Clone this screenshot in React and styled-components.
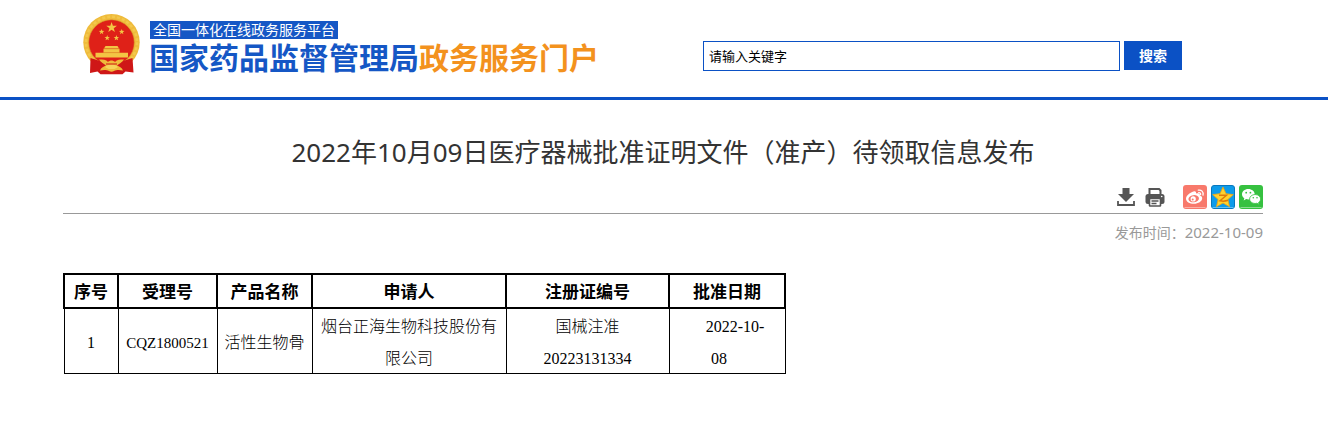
import React from 'react';
import styled, { createGlobalStyle } from 'styled-components';

const sans = `'Noto Sans', 'Noto Sans CJK SC', sans-serif`;
const cjk = `'Noto Sans CJK SC', sans-serif`;

const columns = [
  { label: '序号', width: 54 },
  { label: '受理号', width: 99 },
  { label: '产品名称', width: 95 },
  { label: '申请人', width: 194 },
  { label: '注册证编号', width: 163 },
  { label: '批准日期', width: 116 },
];

const star = (cx, cy, r) =>
  Array.from({ length: 10 }, (_, i) => {
    const a = (Math.PI / 5) * i - Math.PI / 2;
    const d = i % 2 ? r * 0.4 : r;
    return `${(cx + d * Math.cos(a)).toFixed(2)},${(cy + d * Math.sin(a)).toFixed(2)}`;
  }).join(' ');

const Emblem = () => (
  <svg width='57' height='61' viewBox='0 0 57 61' aria-hidden='true'>
    <circle cx='28.5' cy='28.3' r='28.2' fill='#efbb3b' />
    <circle cx='28.5' cy='28.3' r='25.5' fill='none' stroke='#f3c84c' strokeWidth='2.5' strokeDasharray='3 2' />
    <circle cx='28.5' cy='28.5' r='22.8' fill='#df2118' stroke='#d99a2a' strokeWidth='0.6' />
    <g fill='#f3c544'>
      <polygon points={star(28.6, 13.5, 5.6)} />
      <polygon points={star(18.6, 17.8, 2.9)} />
      <polygon points={star(38.7, 17.8, 2.9)} />
      <polygon points={star(24.2, 24, 2.9)} />
      <polygon points={star(33.4, 24, 2.9)} />
      <path d='M22.5 32h12l1.5 2.6H21z' />
      <path d='M20.5 34.8h16v4h-16z' />
      <path d='M12.5 38.8h32.5v4.6H12.5z' />
    </g>
    <path d='M20.5 34.8h16M20 38.6h17' stroke='#d9811f' strokeWidth='0.5' />
    <path d='M7.5 44c6 2 10 3 13 4.5h16c3-1.500 7-2.500 13-4.500l1 14.500-8-1-3 2.800H17.500l-3-2.800-7.500 1.500z' fill='#cf1717' />
    <path d='M16 45.500c4 0 7 0 9 2.500 2-2 5-2 7 0 2-2.500 5-2.500 9-2.500-2 3-5 4-7 6 2 1 5 2 6 5-4-1-7-.5-9 .5-1.500 1-3.500 1-5 0-2-1-5-1.500-9-.5 1-3 4-4 6-5-2-2-5-3-7-6z' fill='#efbb3b' />
    <path d='M22 53c3-3.500 10-3.500 13 0l-3.500 2h-6z' fill='#f7d35c' />
    <path d='M23 50h11M25.500 58.500h7' stroke='#cf1717' strokeWidth='1' />
  </svg>
);

const DownloadIcon = () => (
  <svg width='18' height='18' viewBox='0 0 18 18' aria-hidden='true'>
    <path d='M5.500 0h7v6H17l-8 8-8-8h4.500z' fill='#555' />
    <path d='M1 13v4h16v-4' fill='none' stroke='#555' strokeWidth='1.800' />
  </svg>
);

const PrintIcon = () => (
  <svg width='20' height='19' viewBox='0 0 20 19' aria-hidden='true'>
    <path d='M4.500 6V1h9.500l1.500 1.500V6' fill='none' stroke='#555' strokeWidth='2' />
    <rect x='0.500' y='6' width='19' height='10' rx='2.500' fill='#555' />
    <rect x='4.500' y='10.500' width='11' height='7.500' rx='0.5' fill='#fff' stroke='#555' strokeWidth='1.600' />
    <path d='M6.500 13h7M6.500 15.500h5' stroke='#555' strokeWidth='1.300' />
    <circle cx='16.700' cy='8.500' r='0.800' fill='#fff' />
  </svg>
);

const WeiboIcon = () => (
  <svg width='24' height='24' viewBox='0 0 24 24' aria-hidden='true'>
    <rect width='24' height='24' rx='3' fill='#f8796b' />
    <path d='M1.500 22.500h21' stroke='#fbb0a7' />
    <path
      d='M10.500 6.500c1.600-.6 2.900.1 2.500 2 2.300-.7 4.300-.1 3.900 1.900 1.500.5 2.300 1.400 2.300 2.800 0 3-4 5.500-8.300 5.500-4.300 0-7.900-2-7.900-5 0-2.700 3.700-6.200 7.500-7.200z'
      fill='#fff'
    />
    <ellipse cx='10.700' cy='13.700' rx='5.300' ry='3.600' transform='rotate(-8 10.700 13.700)' fill='#f8796b' />
    <circle cx='10.200' cy='13.900' r='2.600' fill='#fff' />
    <circle cx='9.700' cy='14.400' r='1' fill='#f8796b' />
    <path d='M15.300 5.200c3-.7 5.500 1.600 4.700 5M15.700 7.700c1.300-.2 2.200.7 1.900 2' fill='none' stroke='#fff' strokeWidth='1.300' strokeLinecap='round' />
  </svg>
);

const QzoneIcon = () => (
  <svg width='24' height='24' viewBox='0 0 24 24' aria-hidden='true'>
    <rect x='0.500' y='0.500' width='23' height='23' rx='2.500' fill='#0d9bea' stroke='#0877bd' />
    <path d='M1.500 22.500h21' stroke='#5fc0f5' />
    <path
      d='M12 2l3 6.700 7.300.9-5.400 4.900 1.600 7.200L12 18l-6.500 3.700 1.600-7.200-5.400-4.900L9 8.700z'
      fill='#ffd22e'
      stroke='#f3a50c'
      strokeWidth='0.800'
      strokeLinejoin='round'
    />
    <path d='M8 10.200h7.500L9 15.800c3 .6 5.500.4 8-.5' fill='none' stroke='#e07a08' strokeWidth='1.500' />
  </svg>
);

const WechatIcon = () => (
  <svg width='24' height='24' viewBox='0 0 24 24' aria-hidden='true'>
    <rect width='24' height='24' rx='3' fill='#36c140' />
    <path d='M1.500 22.500h21' stroke='#8bdd90' />
    <path d='M9.300 4C5.700 4 3 6.300 3 9.200c0 1.600.9 3 2.300 4l-.6 2.300 2.500-1.400c.7.200 1.400.3 2.100.3 3.600 0 6.400-2.300 6.400-5.200S12.900 4 9.300 4z' fill='#fff' />
    <path
      d='M16.100 9.500c-3.100 0-5.500 2-5.500 4.500s2.400 4.500 5.500 4.500c.6 0 1.200-.1 1.800-.3l2.200 1.200-.5-2c1.200-.8 2-2 2-3.400 0-2.500-2.400-4.500-5.500-4.500z'
      fill='#fff'
      stroke='#36c140'
      strokeWidth='0.800'
    />
    <g fill='#36c140'>
      <circle cx='7.200' cy='7.700' r='0.900' />
      <circle cx='11.400' cy='7.700' r='0.900' />
      <circle cx='14.300' cy='12.700' r='0.800' />
      <circle cx='18' cy='12.700' r='0.800' />
    </g>
  </svg>
);

const App = () => {
  return (
    <>
      <GlobalStyle />
      <Header>
        <Brand href='#'>
          <Emblem />
          <BrandText>
            <Platform>全国一体化在线政务服务平台</Platform>
            <SiteName>
              国家药品监督管理局<em>政务服务门户</em>
            </SiteName>
          </BrandText>
        </Brand>
        <Search onSubmit={(e) => e.preventDefault()}>
          <SearchInput type='text' aria-label='搜索关键字' defaultValue='请输入关键字' />
          <SearchButton type='submit'>搜索</SearchButton>
        </Search>
      </Header>
      <Main>
        <Title>2022年10月09日医疗器械批准证明文件（准产）待领取信息发布</Title>
        <Toolbar>
          <Tools>
            <IconButton type='button' aria-label='下载'>
              <DownloadIcon />
            </IconButton>
            <IconButton type='button' aria-label='打印'>
              <PrintIcon />
            </IconButton>
          </Tools>
          <Share>
            <ShareLink href='#' aria-label='微博'>
              <WeiboIcon />
            </ShareLink>
            <ShareLink href='#' aria-label='QQ空间'>
              <QzoneIcon />
            </ShareLink>
            <ShareLink href='#' aria-label='微信'>
              <WechatIcon />
            </ShareLink>
          </Share>
        </Toolbar>
        <Published>
          发布时间：<time dateTime='2022-10-09'>2022-10-09</time>
        </Published>
        <Table>
          <colgroup>
            {columns.map(({ label, width }) => (
              <Col key={label} $width={width} />
            ))}
          </colgroup>
          <thead>
            <tr>
              {columns.map(({ label }) => (
                <Th key={label} scope='col'>
                  {label}
                </Th>
              ))}
            </tr>
          </thead>
          <tbody>
            <tr>
              <Td>
                <Latin>1</Latin>
              </Td>
              <Td>
                <Latin $small>CQZ1800521</Latin>
              </Td>
              <Td>活性生物骨</Td>
              <Td>烟台正海生物科技股份有限公司</Td>
              <Td>
                国械注准
                <br />
                <Latin>20223131334</Latin>
              </Td>
              <Td>
                <Latin>
                  &nbsp;&nbsp;&nbsp;&nbsp;2022-10-
                  <br />
                  08&nbsp;&nbsp;&nbsp;&nbsp;
                </Latin>
              </Td>
            </tr>
          </tbody>
        </Table>
      </Main>
    </>
  );
};

const GlobalStyle = createGlobalStyle`
  * {
    box-sizing: border-box;
  }
  body {
    margin: 0;
    background: #fff;
    color: #000;
    font-family: ${sans};
  }
`;

const Header = styled.header`
  display: flex;
  justify-content: space-between;
  align-items: flex-start;
  gap: 24px;
  padding: 14px 146px 22px 83px;
  border-bottom: 3px solid #0b51c5;
`;

const Brand = styled.a`
  display: flex;
  flex-shrink: 0;
  gap: 9px;
  text-decoration: none;
  svg {
    display: block;
  }
`;

const BrandText = styled.span`
  display: flex;
  flex-direction: column;
  align-items: flex-start;
  padding-top: 7px;
  font-family: ${cjk};
`;

const Platform = styled.span`
  margin-left: 1px;
  padding: 0 3px 2px;
  background: #1557c5;
  color: #fff;
  font-size: 14px;
  line-height: 16px;
`;

const SiteName = styled.span`
  color: #1557c5;
  font-size: 30px;
  font-weight: 700;
  line-height: 34px;
  white-space: nowrap;
  em {
    color: #f3921e;
    font-style: normal;
  }
`;

const Search = styled.form`
  display: flex;
  flex: 0 1 479px;
  align-items: flex-start;
  gap: 4px;
  padding-top: 27px;
`;

const SearchInput = styled.input`
  flex: 1;
  min-width: 0;
  height: 30px;
  padding: 0 5px 2px;
  border: 1px solid #0b51c5;
  background: #fff;
  color: #000;
  font-family: ${cjk};
  font-size: 13px;
`;

const SearchButton = styled.button`
  height: 29px;
  padding: 0 15px 2px;
  border: 0;
  background: #0b51c5;
  color: #fff;
  font-family: ${cjk};
  font-size: 14px;
  font-weight: 700;
  cursor: pointer;
`;

const Main = styled.main`
  padding: 32px 65px 48px 63px;
`;

const Title = styled.h1`
  margin: 0;
  color: #333;
  font-size: 26px;
  font-weight: 400;
  line-height: 40px;
  text-align: center;
`;

const Toolbar = styled.div`
  display: flex;
  justify-content: flex-end;
  align-items: center;
  gap: 18px;
  padding: 13px 0 4px;
  border-bottom: 1px solid #999;
`;

const Tools = styled.div`
  display: flex;
  align-items: center;
  gap: 10px;
`;

const IconButton = styled.button`
  display: block;
  padding: 0;
  border: 0;
  background: none;
  cursor: pointer;
  svg {
    display: block;
  }
`;

const Share = styled.div`
  display: flex;
  gap: 4px;
`;

const ShareLink = styled.a`
  svg {
    display: block;
  }
`;

const Published = styled.p`
  margin: 7px 0 29px;
  color: #999;
  font-size: 14px;
  line-height: 23px;
  text-align: right;
  time {
    font-size: 15px;
  }
`;

const Table = styled.table`
  width: 722px;
  max-width: 100%;
  border-collapse: collapse;
  table-layout: fixed;
  font-family: ${cjk};
`;

const Col = styled.col`
  width: ${({ $width }) => $width}px;
`;

const Th = styled.th`
  padding: 0;
  border: 2px solid #000;
  font-size: 17px;
  font-weight: 700;
  line-height: 32px;
`;

const Td = styled.td`
  padding: 0 5px;
  border: 1px solid #000;
  font-size: 16px;
  font-weight: 300;
  line-height: 32px;
  text-align: center;
`;

const Latin = styled.span`
  font-family: 'Liberation Serif', serif;
  font-size: ${({ $small }) => ($small ? 15 : 16)}px;
  line-height: 16px;
`;

export default App;
